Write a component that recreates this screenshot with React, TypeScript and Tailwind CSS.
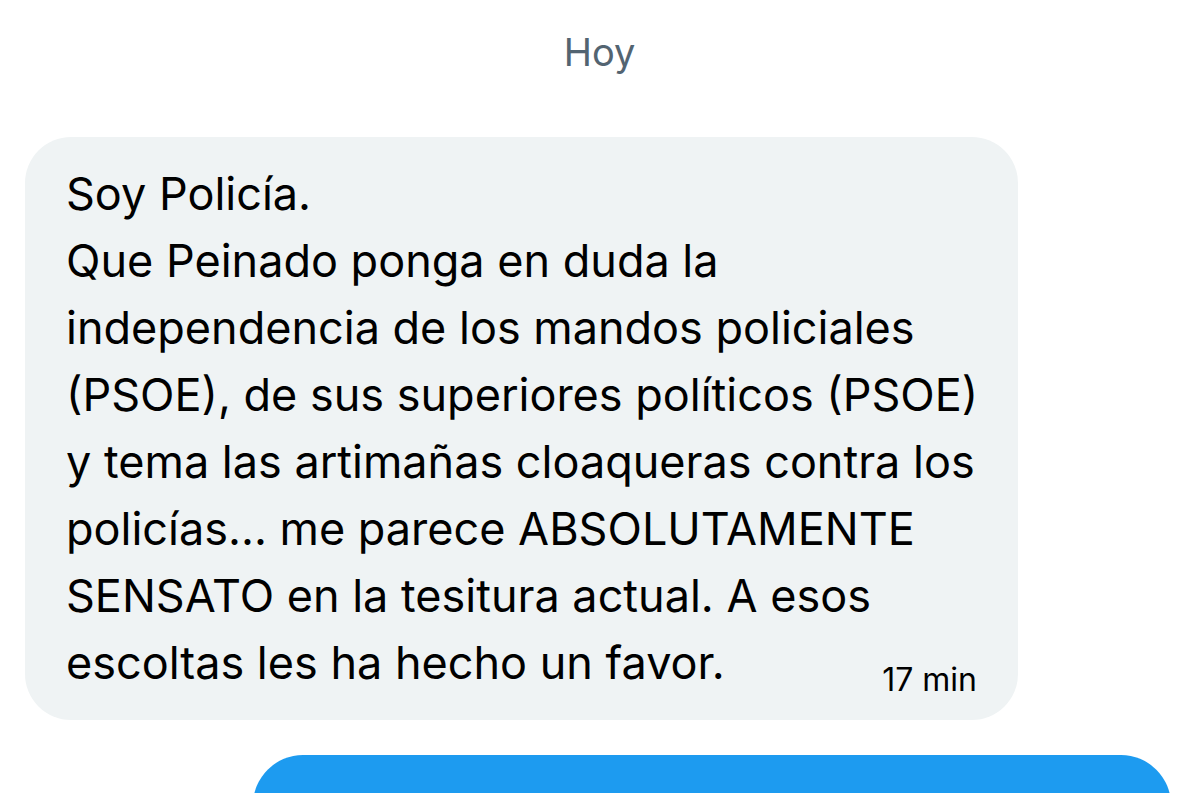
import React from "react";

const lines = [
  "Soy Policía.",
  "Que Peinado ponga en duda la",
  "independencia de los mandos policiales",
  "(PSOE), de sus superiores políticos (PSOE)",
  "y tema las artimañas cloaqueras contra los",
  "policías... me parece ABSOLUTAMENTE",
  "SENSATO en la tesitura actual. A esos",
];

export default function App() {
  return (
    <div
      className="w-[1199px] h-[793px] overflow-hidden bg-white flex flex-col"
      style={{ fontFamily: "Inter, 'Noto Sans', sans-serif" }}
    >
      <div className="h-[104px] shrink-0 flex items-center justify-center text-[38px] leading-[46px] text-[#536471]">
        Hoy
      </div>
      <div className="mt-[33px] ml-[25px] w-[993px] shrink-0 rounded-[46px] bg-[#eff3f4] pl-[41px] pr-[41px] pt-[23px] pb-[24px] text-black">
        <div className="text-[45px] leading-[67px]">
          {lines.map((l, i) => (
            <div key={i} className="whitespace-nowrap">{l}</div>
          ))}
          <div className="flex items-end justify-between">
            <span className="whitespace-nowrap">escoltas les ha hecho un favor.</span>
            <span className="text-[32px] leading-[32px] whitespace-nowrap">17 min</span>
          </div>
        </div>
      </div>
      <div className="mt-[35px] ml-[253px] w-[918px] h-[200px] shrink-0 rounded-[50px] bg-[#1d9bf0]" />
    </div>
  );
}
